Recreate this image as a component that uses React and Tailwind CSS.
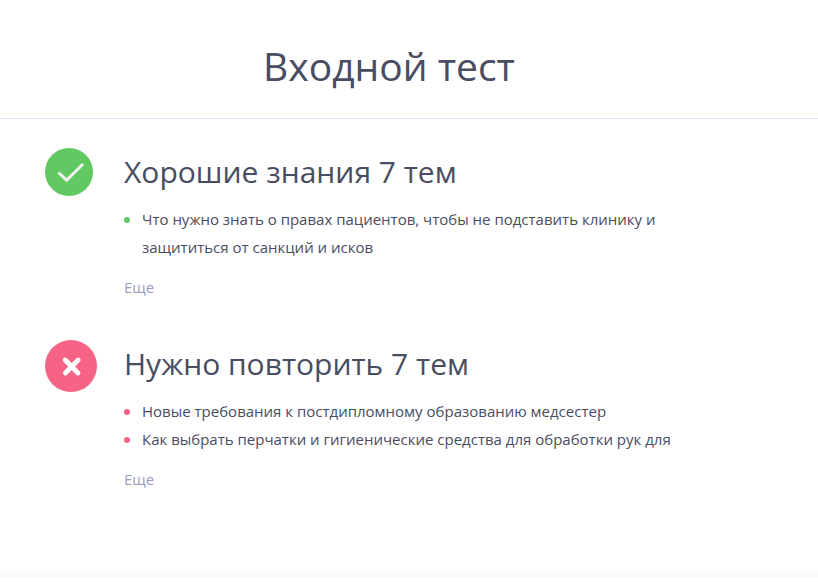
import React from 'react';

const sections = [
  {
    id: 'good',
    title: 'Хорошие знания 7 тем',
    items: ['Что нужно знать о правах пациентов, чтобы не подставить клинику и защититься от санкций и исков'],
  },
  {
    id: 'repeat',
    title: 'Нужно повторить 7 тем',
    items: [
      'Новые требования к постдипломному образованию медсестер',
      'Как выбрать перчатки и гигиенические средства для обработки рук для',
    ],
  },
];

const StatusIcon = ({ type }) => {
  if (type === 'good') {
    return (
      <svg className="size-12" viewBox="0 0 48 48" fill="none" aria-hidden="true">
        <circle cx="24" cy="24" r="24" fill="#62c962" />
        <path d="M14.5 25.5 L21.6 32.2 L37 17" stroke="#f0f2f4" strokeWidth="3" strokeLinecap="square" />
      </svg>
    );
  }

  return (
    <svg className="size-13" viewBox="0 0 52 52" fill="none" aria-hidden="true">
      <circle cx="26" cy="26" r="26" fill="#f76384" />
      <path d="M20.2 20 L33 33 M33.2 20 L20.4 33" stroke="#fff" strokeWidth="4.8" strokeLinecap="round" />
    </svg>
  );
};

const App = () => {
  return (
    <div className="min-h-screen flex flex-col bg-white font-['Open_Sans',sans-serif] text-[#484d62]">
      {/* Heading */}
      <header className="border-b border-[#dfe3f3] pt-9 pb-[22px] pr-10 text-center">
        <h1 className="text-[39px] leading-[60px]">Входной тест</h1>
      </header>

      {/* Results */}
      <main className="grow px-[45px] pt-7 space-y-[38px]">
        {sections.map((section) => (
          <section key={section.id} className="flex">
            <div className="w-[79px] shrink-0 pt-px">
              <StatusIcon type={section.id} />
            </div>
            <div className="max-w-[560px]">
              <h2 className="text-[30px] leading-[50px]">{section.title}</h2>
              <ul className="mt-2 text-[15px] leading-7">
                {section.items.map((item) => (
                  <li key={item} className="flex gap-3">
                    <span
                      className={`mt-3 size-1.5 shrink-0 rounded-full ${
                        section.id === 'good' ? 'bg-[#62c962]' : 'bg-[#f76384]'
                      }`}
                    />
                    {item}
                  </li>
                ))}
              </ul>
              <button type="button" className="mt-3 text-[15px] leading-7 text-[#9b9fc0]">
                Еще
              </button>
            </div>
          </section>
        ))}
      </main>

      {/* Soft edge under the results */}
      <footer className="mb-1 h-2 bg-linear-to-b from-white to-[#f5f6f7]" />
    </div>
  );
};

export default App;
